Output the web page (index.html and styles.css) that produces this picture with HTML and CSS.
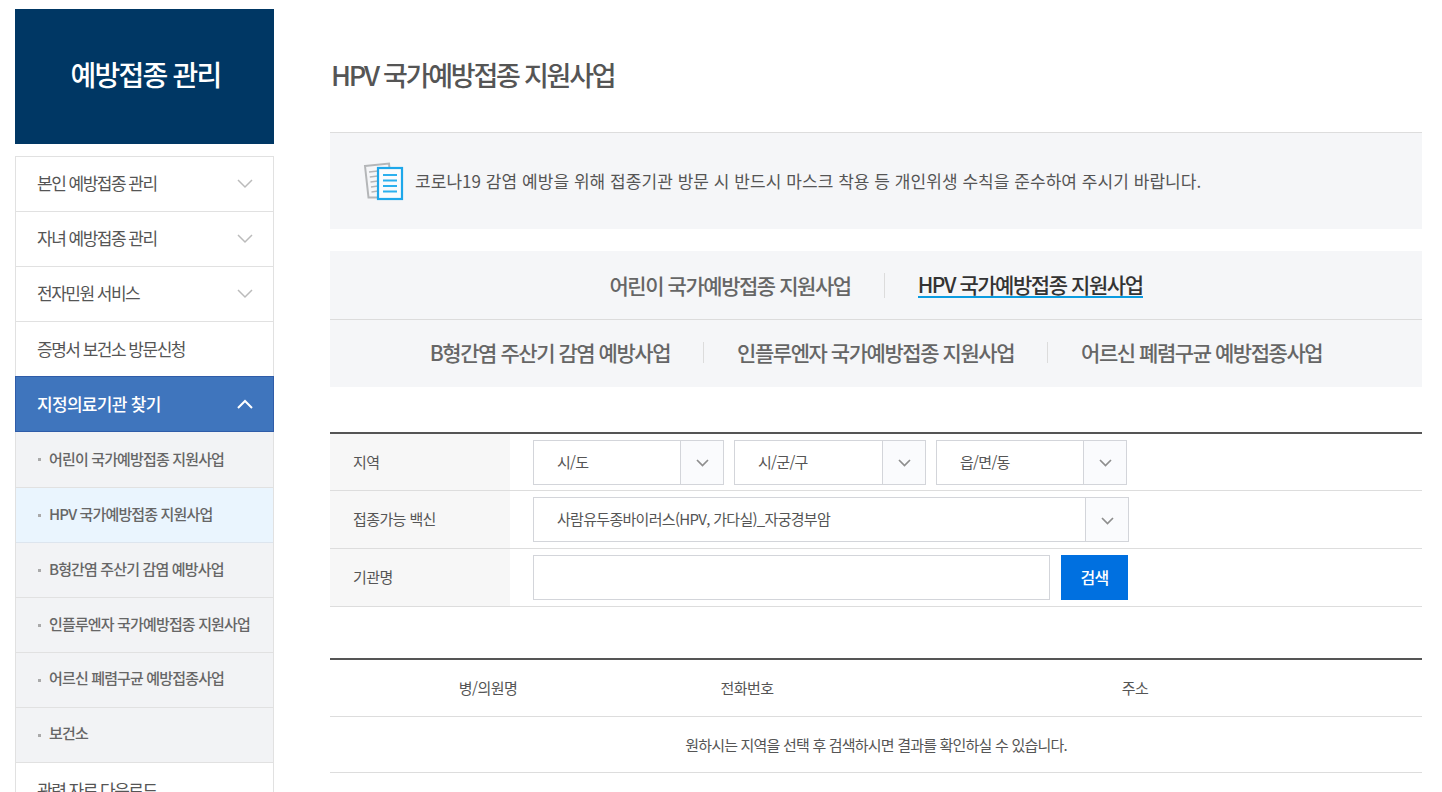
FILE: index.html
```html
<!DOCTYPE html>
<html lang="ko">
<head>
<meta charset="utf-8">
<title>HPV 국가예방접종 지원사업</title>
<link rel="stylesheet" href="styles.css">
</head>
<body>
<div class="page">
  <aside class="side">
    <h2 class="side-title">예방접종 관리</h2>
    <ul class="menu">
      <li class="menu-item"><span class="lift">본인 예방접종 관리</span><svg class="chev" width="16" height="10" viewBox="0 0 16 10"><path d="M1 1l7 7 7-7"/></svg></li>
      <li class="menu-item"><span class="lift">자녀 예방접종 관리</span><svg class="chev" width="16" height="10" viewBox="0 0 16 10"><path d="M1 1l7 7 7-7"/></svg></li>
      <li class="menu-item"><span class="lift">전자민원 서비스</span><svg class="chev" width="16" height="10" viewBox="0 0 16 10"><path d="M1 1l7 7 7-7"/></svg></li>
      <li class="menu-item"><span>증명서 보건소 방문신청</span></li>
      <li class="menu-item active"><span>지정의료기관 찾기</span><svg class="chev" width="16" height="10" viewBox="0 0 16 10"><path d="M1 9l7-7 7 7"/></svg></li>
      <li class="sub-item">어린이 국가예방접종 지원사업</li>
      <li class="sub-item current">HPV 국가예방접종 지원사업</li>
      <li class="sub-item">B형간염 주산기 감염 예방사업</li>
      <li class="sub-item">인플루엔자 국가예방접종 지원사업</li>
      <li class="sub-item lifted">어르신 폐렴구균 예방접종사업</li>
      <li class="sub-item lifted">보건소</li>
      <li class="menu-item"><span>관련 자료 다운로드</span></li>
    </ul>
  </aside>
  <main class="main">
    <h1 class="title">HPV 국가예방접종 지원사업</h1>
    <div class="notice">
      <svg class="notice-icon" width="42" height="40" viewBox="0 0 42 40">
        <path class="doc-back" d="M2 5l24-2.500.5 5H15v29H5.500z"/>
        <path class="doc-lines" d="M6 11l9-1M6.800 16l8-1M7.500 21l7.500-1M8 26l7-1M8.500 31l6.500-1"/>
        <rect class="doc-front" x="15" y="7" width="24" height="31"/>
        <path class="doc-front-lines" d="M20 14h14M20 19.500h14M20 25h14M20 30.500h14"/>
      </svg>
      <p>코로나19 감염 예방을 위해 접종기관 방문 시 반드시 마스크 착용 등 개인위생 수칙을 준수하여 주시기 바랍니다.</p>
    </div>
    <div class="tabs">
      <div class="tab-row">
        <a class="tab">어린이 국가예방접종 지원사업</a>
        <a class="tab on"><span>HPV 국가예방접종 지원사업</span></a>
      </div>
      <div class="tab-row">
        <a class="tab">B형간염 주산기 감염 예방사업</a>
        <a class="tab">인플루엔자 국가예방접종 지원사업</a>
        <a class="tab">어르신 폐렴구균 예방접종사업</a>
      </div>
    </div>
    <div class="form">
      <div class="form-row">
        <div class="form-label">지역</div>
        <div class="form-field">
          <div class="select w-191"><span>시/도</span><i class="arrow"><svg width="13" height="8" viewBox="0 0 13 8"><path d="M1 1l5.500 5.500L12 1"/></svg></i></div>
          <div class="select w-192"><span>시/군/구</span><i class="arrow"><svg width="13" height="8" viewBox="0 0 13 8"><path d="M1 1l5.500 5.500L12 1"/></svg></i></div>
          <div class="select w-191"><span>읍/면/동</span><i class="arrow"><svg width="13" height="8" viewBox="0 0 13 8"><path d="M1 1l5.500 5.500L12 1"/></svg></i></div>
        </div>
      </div>
      <div class="form-row">
        <div class="form-label">접종가능 백신</div>
        <div class="form-field">
          <div class="select w-596"><span>사람유두종바이러스(HPV, 가다실)_자궁경부암</span><i class="arrow"><svg width="13" height="8" viewBox="0 0 13 8"><path d="M1 1l5.500 5.500L12 1"/></svg></i></div>
        </div>
      </div>
      <div class="form-row">
        <div class="form-label">기관명</div>
        <div class="form-field">
          <input class="input" type="text" aria-label="기관명">
          <button class="btn" type="button">검색</button>
        </div>
      </div>
    </div>
    <table class="result">
      <thead>
        <tr><th class="c1">병/의원명</th><th class="c2">전화번호</th><th>주소</th></tr>
      </thead>
      <tbody>
        <tr><td colspan="3">원하시는 지역을 선택 후 검색하시면 결과를 확인하실 수 있습니다.</td></tr>
      </tbody>
    </table>
  </main>
</div>
</body>
</html>
```

FILE: styles.css
```css
* { box-sizing: border-box; }
html, body { margin: 0; padding: 0; height: 792px; overflow: hidden; background: #fff; }
body { font-family: "Noto Sans CJK KR", "Noto Sans", sans-serif; color: #555; }
.page { display: flex; align-items: flex-start; padding: 9px 20px 0 15px; gap: 56px; }
.side { width: 259px; flex: none; }
.side-title {
  margin: 0 0 12px; height: 135px; padding: 0 0 6px 2px; background: #003764; color: #fff;
  display: flex; align-items: center; justify-content: center;
  font-size: 28px; font-weight: 500; letter-spacing: -1.800px;
}
.menu { list-style: none; margin: 0; padding: 0; border: solid #e1e1e1; border-width: 1px 1px 0; }
.menu-item {
  height: 55px; display: flex; align-items: center; justify-content: space-between;
  padding: 0 20px 2px 21px; font-size: 17px; letter-spacing: -1.500px; color: #555;
  border-bottom: 1px solid #e1e1e1; background: #fff;
}
.lift { padding-bottom: 2px; }
.chev { fill: none; stroke: #bbb; stroke-width: 1.500; margin-top: 2px; }
.menu-item.active {
  margin: -1px -1px 0; padding: 0 20px 2px 21px; height: 56px; background: #3f75bd; color: #fff; font-weight: 500;
  border: 1px solid #2f5ca8; letter-spacing: -0.700px;
}
.menu-item.active .chev { stroke: #fff; stroke-width: 2; }
.sub-item {
  height: 55px; display: flex; align-items: center; padding: 0 0 3px 33px;
  font-size: 15px; letter-spacing: -0.850px; color: #666; font-weight: 500;
  background: #f2f3f5; border-bottom: 1px solid #e1e1e1; position: relative;
}
.sub-item.lifted { padding-bottom: 5px; }
.sub-item::before {
  content: ""; position: absolute; left: 22px; top: 26px; width: 3px; height: 3px; background: #aaa;
}
.menu-item.active + .sub-item { height: 56px; }
.sub-item.current { background: #eaf5fe; border-bottom-color: #dde5ee; }
.main { width: 1092px; flex: none; }
.title {
  margin: 0; height: 123px; padding: 46px 0 0 1px; font-size: 27px; line-height: 40px; font-weight: 500;
  letter-spacing: -2.250px; color: #555;
}
.notice {
  height: 97px; display: flex; align-items: center; background: #f5f6f8;
  border-top: 1px solid #ddd; padding: 0 0 0 33px; margin-bottom: 22px;
}
.notice-icon { flex: none; margin-right: 10px; margin-top: -1px; }
.notice p { margin: 0 0 2px; font-size: 17px; letter-spacing: 0.050px; color: #555; }
.doc-back { fill: #f5f6f8; stroke: #b4b6b8; stroke-width: 2; }
.doc-lines { fill: none; stroke: #b4b6b8; stroke-width: 1.500; }
.doc-front { fill: #f9fbfd; stroke: #1da7ea; stroke-width: 2.200; }
.doc-front-lines { fill: none; stroke: #2bb0ee; stroke-width: 2; }
.tabs { background: #f5f6f8; margin-bottom: 45px; }
.tab-row {
  height: 69px; display: flex; align-items: center; justify-content: center;
  border-bottom: 1px solid #dcdcdc;
}
.tab-row + .tab-row { border-bottom: 0; height: 67px; padding-bottom: 2px; }
.tab {
  font-size: 21px; font-weight: 500; letter-spacing: -1.450px; color: #666; padding: 0 33px; line-height: 21px;
  border-left: 1px solid #dcdcdc;
}
.tab:first-child { border-left: 0; }
.tab.on { color: #333; }
.tab.on span { border-bottom: 2px solid #0a9be0; display: inline-block; line-height: 23px; }
.form { border-top: 2px solid #555; margin-bottom: 51px; }
.form-row { display: flex; height: 58px; border-bottom: 1px solid #ddd; }
.form-row:first-child { height: 57px; }
.form-label {
  width: 180px; flex: none; background: #f7f7f7; padding: 0 0 2px 23px;
  display: flex; align-items: center; font-size: 15px; letter-spacing: -0.600px; color: #555;
}
.form-field { display: flex; align-items: center; padding-left: 23px; gap: 10px; }
.select {
  height: 45px; display: flex; align-items: center; justify-content: space-between;
  border: 1px solid #d3d5da; padding-left: 23px; font-size: 15px; letter-spacing: -0.700px; color: #555; background: #fff;
}
.select span { padding-bottom: 2px; }
.w-191 { width: 191px; }
.w-192 { width: 192px; }
.w-596 { width: 596px; }
.arrow {
  width: 43px; height: 100%; border-left: 1px solid #d3d5da; background: #fafbfd;
  display: flex; align-items: center; justify-content: center; flex: none;
}
.arrow svg { fill: none; stroke: #8e8e8e; stroke-width: 1.700; margin: 2px 0 0 1px; }
.input { width: 517px; height: 45px; border: 1px solid #d3d5da; background: #fff; padding: 0; }
.btn {
  width: 67px; height: 45px; margin-left: 1px; border: 0; background: #0070e0; color: #fff; padding: 0 0 2px;
  font-family: inherit; font-size: 16px; font-weight: 500; letter-spacing: -0.700px;
}
.result { width: 100%; border-collapse: collapse; border-top: 2px solid #555; table-layout: fixed; font-size: 15px; letter-spacing: -0.800px; color: #555; }
.result th { height: 57px; font-weight: 400; letter-spacing: -0.500px; border-bottom: 1px solid #ddd; padding: 0; }
.result td { height: 56px; text-align: center; border-bottom: 1px solid #ddd; padding: 0; }
.c1 { width: 316px; }
.c2 { width: 202px; }
```
